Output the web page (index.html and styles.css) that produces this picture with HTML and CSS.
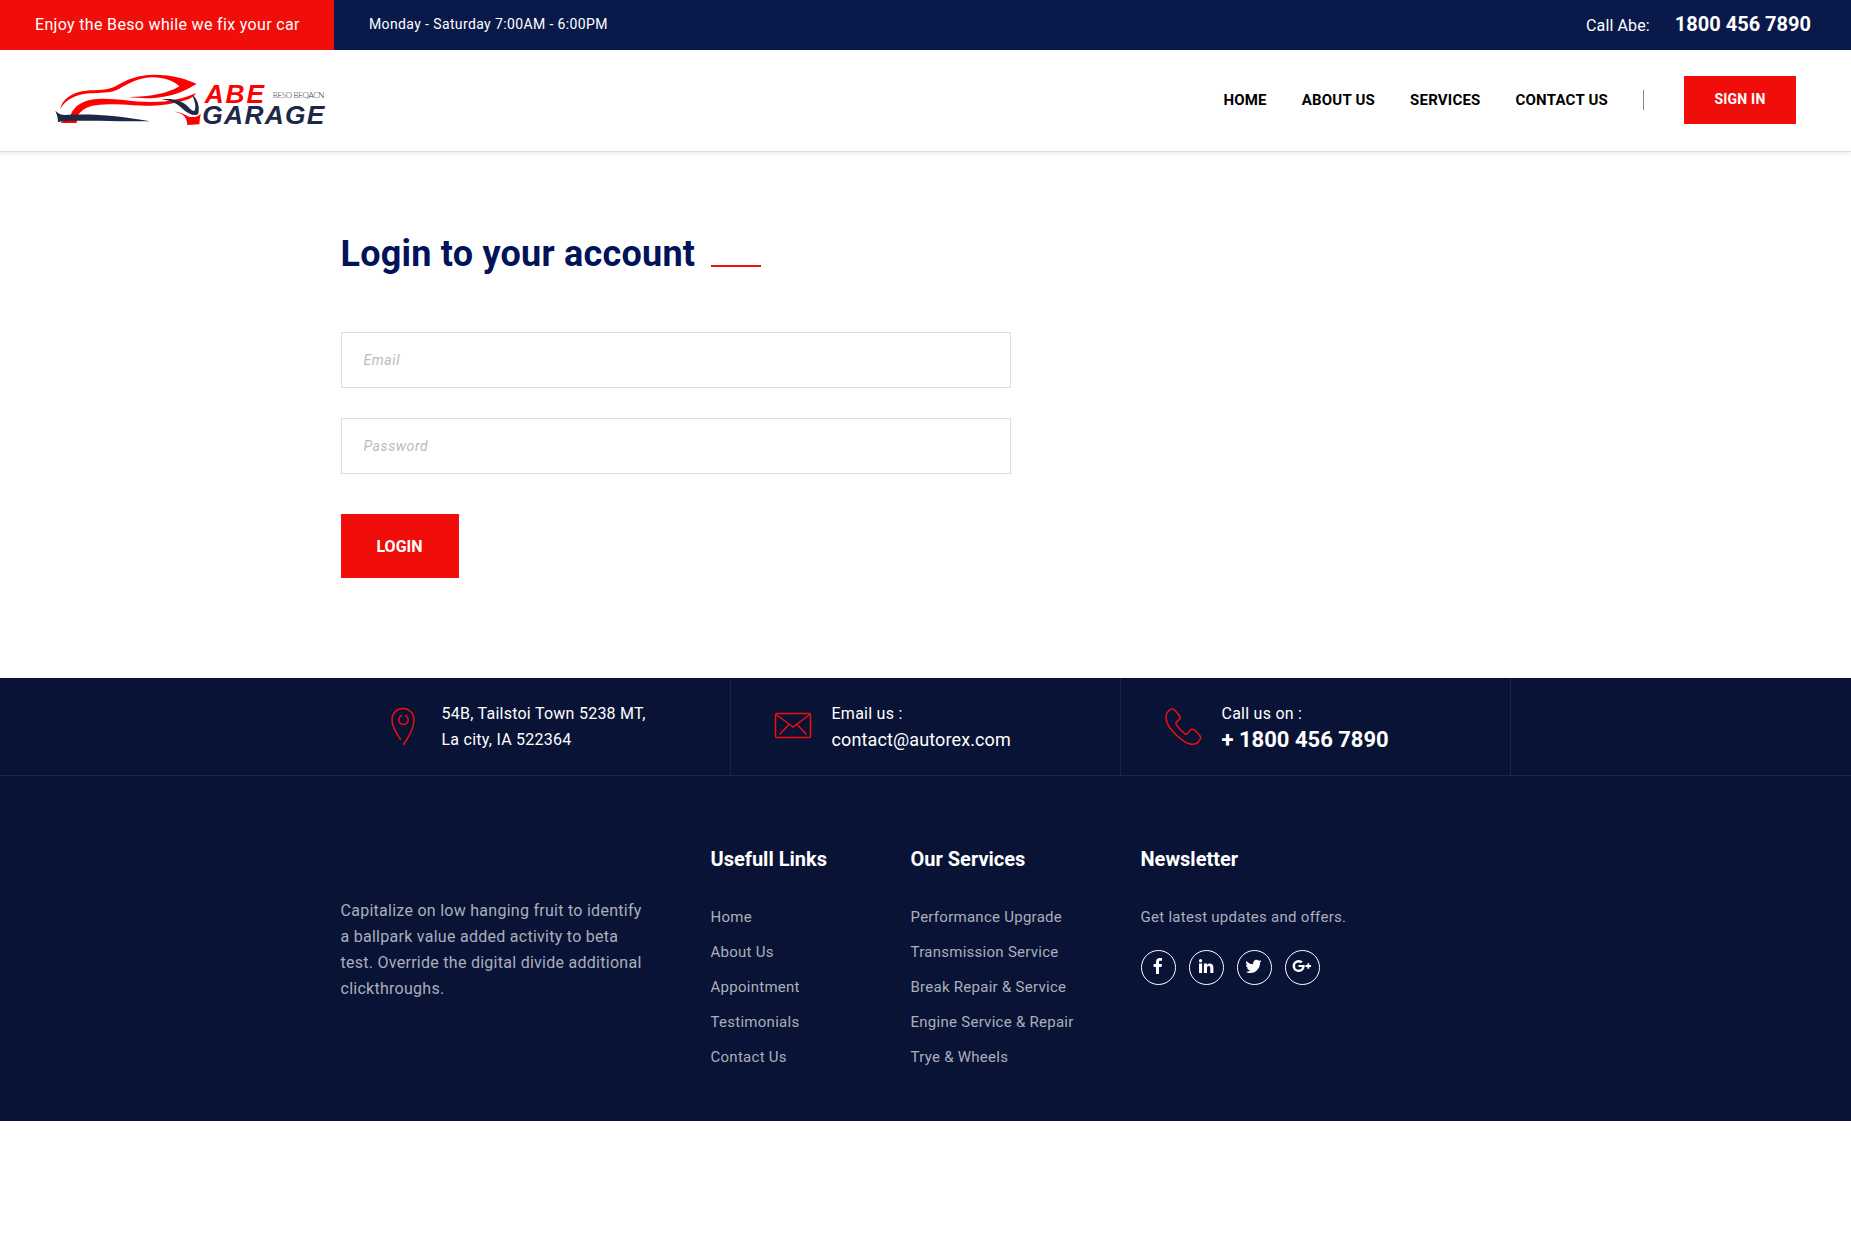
FILE: index.html
```html
<!DOCTYPE html>
<html lang="en">
<head>
<meta charset="utf-8">
<title>Abe Garage - Login</title>
<link rel="stylesheet" href="styles.css">
</head>
<body>
<header class="header">
  <div class="topbar">
    <div class="topbar-promo">Enjoy the Beso while we fix your car</div>
    <div class="topbar-hours">Monday - Saturday 7:00AM - 6:00PM</div>
    <div class="topbar-call"><span class="call-label">Call Abe:</span><strong class="call-number">1800 456 7890</strong></div>
  </div>
  <div class="navbar">
    <a class="logo" href="#" aria-label="Abe Garage">
      <svg width="300" height="80" viewBox="0 0 900 240">
        <g fill="#f00">
          <path d="M60 147C68 118 94 100 126 94C160 88 190 94 220 82C252 66 276 46 340 44C400 44 442 58 470 72C440 88 410 108 350 113C320 116 290 114 265 111C330 110 380 102 418 79C400 62 370 51 335 52C290 55 264 72 238 86C212 101 180 97 146 100C104 104 78 120 60 147Z"/>
          <path d="M62 189C66 182 86 180 92 164C104 136 130 120 172 117C230 114 270 126 330 126C390 126 430 116 468 99C462 110 452 116 440 119C390 136 340 139 280 136C230 132 200 132 168 136C138 140 124 152 112 168L110 189Z"/>
          <path d="M404 155C430 156 440 170 452 171C468 172 474 168 483 161C478 174 480 182 478 193L442 195C440 172 432 160 404 155Z"/>
        </g>
        <g fill="#1d2747">
          <path d="M46 152C54 160 62 165 76 165C160 160 240 168 330 184C250 184 160 182 100 182C80 182 66 184 54 186C54 172 50 162 46 152Z"/>
          <path d="M364 118C400 114 424 122 440 136C450 146 456 154 463 153C470 140 464 122 456 104C474 116 480 144 474 163C462 170 444 160 432 150C408 128 394 122 364 118Z"/>
        </g>
        <text class="logo-abe" x="494" y="129" textLength="178">ABE</text>
        <text class="logo-garage" x="487" y="193" textLength="366">GARAGE</text>
        <text class="logo-tag" x="698" y="114" textLength="155">BESO BEQACN</text>
      </svg>
    </a>
    <nav class="menu">
      <a href="#">HOME</a>
      <a href="#">ABOUT US</a>
      <a href="#">SERVICES</a>
      <a href="#">CONTACT US</a>
    </nav>
    <span class="menu-divider"></span>
    <a class="signin" href="#">SIGN IN</a>
  </div>
</header>

<main class="login container">
  <h1 class="login-title">Login to your account</h1>
  <form class="login-form">
    <input class="field" type="email" placeholder="Email">
    <input class="field" type="password" placeholder="Password">
    <button class="login-btn" type="button">LOGIN</button>
  </form>
</main>

<footer class="footer">
  <div class="contact-bar">
    <div class="contact-row container">
      <div class="contact">
        <svg class="contact-icon" width="40" height="40" viewBox="0 0 40 40"><path d="M17.500 33.500C12 25.500 9 20 9 13.500A11 11 0 0 1 31 13.500C31 21 27 29.500 20.500 38.500M18.600 9.500A4.700 4.700 0 1 0 22.400 9.500"/></svg>
        <div>54B, Tailstoi Town 5238 MT,<br>La city, IA 522364</div>
      </div>
      <div class="contact">
        <svg class="contact-icon" width="40" height="40" viewBox="0 0 40 40"><rect x="2.500" y="7.500" width="35" height="24" rx="1.500"/><path d="M3 8.500L16 18L20 21L24 18L37 8.500M16 18.500L7 28M24 18.500L33 28"/></svg>
        <div>Email us :<br><span class="contact-mail">contact@autorex.com</span></div>
      </div>
      <div class="contact">
        <svg class="contact-icon" width="40" height="40" viewBox="0 0 40 40"><path transform="translate(.5 .8)" d="M7.300 2.500C9 1.700 10.500 2.300 11.500 3.500L16 9C17 10.500 16.500 12 15.500 13C13 15 11.500 15.500 13 18C15.500 22 18.500 25 21.500 27C24 28.500 24 26 26.500 23.500C28 22.200 30 22.300 31.500 23.500L36.500 29C38 31 37 32.500 35.500 34.500C32 38.500 26 38.500 18.500 33C9 26 2 17 2.500 10C2.700 6 4.500 4 7.300 2.500Z"/></svg>
        <div>Call us on :<br><strong class="contact-phone">+ 1800 456 7890</strong></div>
      </div>
    </div>
  </div>
  <div class="widgets container">
    <p class="about">Capitalize on low hanging fruit to identify<br>a ballpark value added activity to beta<br>test. Override the digital divide additional<br>clickthroughs.</p>
    <section class="widget">
      <h2 class="widget-title">Usefull Links</h2>
      <ul class="links">
        <li>Home</li>
        <li>About Us</li>
        <li>Appointment</li>
        <li>Testimonials</li>
        <li>Contact Us</li>
      </ul>
    </section>
    <section class="widget">
      <h2 class="widget-title">Our Services</h2>
      <ul class="links">
        <li>Performance Upgrade</li>
        <li>Transmission Service</li>
        <li>Break Repair &amp; Service</li>
        <li>Engine Service &amp; Repair</li>
        <li>Trye &amp; Wheels</li>
      </ul>
    </section>
    <section class="widget">
      <h2 class="widget-title">Newsletter</h2>
      <p class="news">Get latest updates and offers.</p>
      <div class="social">
        <a href="#" aria-label="Facebook"><svg width="20" height="20" viewBox="0 0 20 20"><path d="M14 2.100V4.800H12.400C11.200 4.800 11 5.300 11 6.200V8.100H13.900L13.500 10.900H11V18H8V10.900H5.600V8.100H8V5.900C8 3.400 9.500 2 11.800 2C12.800 2 13.700 2 14 2.100Z"/></svg></a>
        <a href="#" aria-label="LinkedIn"><svg width="20" height="20" viewBox="0 0 20 20"><path d="M3 7.600H6.100V17H3ZM4.600 3.100A1.650 1.650 0 1 1 4.500 6.400A1.650 1.650 0 0 1 4.600 3.100ZM7.900 7.600H11V9C11.500 8.200 12.300 7.400 13.900 7.400C15.900 7.400 17.400 8.700 17.400 11.600V17H14.300V12C14.300 10.700 13.800 9.900 12.700 9.900C11.500 9.900 11 10.800 11 12V17H7.900Z"/></svg></a>
        <a href="#" aria-label="Twitter"><svg width="20" height="20" viewBox="0 0 20 20"><path d="M17.700 4.700C17.300 5.400 16.700 6 16 6.500C16.300 12 12 17 6.300 17C4.600 17 3 16.500 1.700 15.700C3.300 15.900 4.900 15.400 6.200 14.400C4.800 14.400 3.600 13.500 3.100 12.200C3.600 12.300 4.200 12.300 4.600 12.100C3 11.800 2 10.400 2 8.900C2.500 9.200 3 9.300 3.500 9.300C2.100 8.300 1.700 6.400 2.500 4.900C4.100 6.900 6.500 8.200 9.300 8.300C8.600 5.600 10.700 3.700 12.500 3.700C13.500 3.700 14.300 4.100 14.900 4.700C15.700 4.500 16.400 4.300 17 3.900C16.800 4.700 16.200 5.300 15.600 5.700C16.400 5.500 17.100 5 17.700 4.700Z"/></svg></a>
        <a href="#" aria-label="Google Plus"><svg width="20" height="20" viewBox="0 0 20 20"><path d="M6.500 8.900H12.600C13.200 12.800 10.700 16 6.700 16A6 6 0 1 1 10.700 5.600L9 7.300C8.500 6.800 7.700 6.400 6.700 6.400A3.650 3.650 0 1 0 6.700 13.700C9.200 13.700 10 12 10.100 11.100H6.500ZM15.400 7.200H17.200V9.100H19.100V10.900H17.200V12.800H15.400V10.900H13.500V9.100H15.400Z"/></svg></a>
      </div>
    </section>
  </div>
</footer>
</body>
</html>
```
FILE: styles.css
```css
* { box-sizing: border-box; }
body { margin: 0; background: #fff; font-family: Roboto, "Liberation Sans", sans-serif; color: #fff; }
a { color: inherit; text-decoration: none; }
h1, h2, p, ul { margin: 0; padding: 0; }
ul { list-style: none; }
.container { width: 1170px; margin: 0 auto; }

/* Header */
.header { height: 152px; border-bottom: 1px solid #dcdee2; box-shadow: 0 2px 5px rgba(0, 0, 0, .08); }
.topbar { display: flex; height: 50px; background: #08194a; line-height: 48px; font-size: 16px; }
.topbar-promo { width: 334px; padding-left: 35px; background: #f10e0a; line-height: 50px; letter-spacing: .33px; }
.topbar-hours { padding-left: 35px; font-size: 14px; letter-spacing: .38px; }
.topbar-call { display: flex; margin-left: auto; padding-right: 40px; gap: 25px; }
.call-label { line-height: 51px; letter-spacing: .13px; }
.call-number { font-size: 20px; font-weight: 700; }

.navbar { display: flex; align-items: center; height: 101px; padding: 0 55px 1px 40px; }
.logo { display: block; height: 80px; }
.logo svg { display: block; }
.logo-abe, .logo-garage { font: italic bold 79px "Liberation Sans", Arial, sans-serif; }
.logo-abe { fill: #f00; }
.logo-garage { fill: #1d2747; }
.logo-tag { font: 300 24px Lato, sans-serif; fill: #1d2747; }
.menu { display: flex; gap: 35px; margin-left: auto; color: #000; font-size: 15px; font-weight: 700; line-height: 20px; letter-spacing: .21px; }
.menu-divider { width: 1px; height: 20px; margin: 0 40px 0 35px; background: #888; }
.signin { width: 112px; height: 48px; background: #f10e0a; font-size: 14px; font-weight: 700; line-height: 46px; text-align: center; letter-spacing: .2px; }

/* Login form */
.login { height: 526px; padding-top: 80px; }
.login-title { display: flex; align-items: flex-start; gap: 16px; color: #03135a; font-size: 36px; font-weight: 700; line-height: 44px; letter-spacing: .22px; }
.login-title::after { content: ""; width: 50px; height: 2px; margin-top: 33px; background: #f10e0a; }
.login-form { display: flex; flex-direction: column; align-items: flex-start; gap: 30px; margin-top: 56px; }
.field { width: 670px; height: 56px; padding: 0 22px; border: 1px solid #ddd; background: #fff; font: 14px Roboto, sans-serif; letter-spacing: .6px; }
.field::placeholder { color: #bbb; font-style: italic; }
.login-btn { width: 118px; height: 64px; margin-top: 10px; border: 0; background: #f10e0a; color: #fff; font: 700 16px Roboto, sans-serif; }

/* Footer */
.footer { height: 443px; background: #091336; }
.contact-bar { height: 98px; border-bottom: 1px solid #1c2748; }
.contact-row { display: flex; height: 97px; }
.contact { display: flex; width: 390px; padding: 23px 0 0 42px; gap: 19px; border-right: 1px solid #1c2748; font-size: 16px; line-height: 26px; letter-spacing: .25px; }
.contact-icon { margin-top: 5px; fill: none; stroke: #f10e0a; stroke-width: 1.5; stroke-linecap: round; overflow: visible; }
.contact-mail { font-size: 18px; letter-spacing: .12px; }
.contact-phone { font-size: 22px; font-weight: 700; letter-spacing: 0; }

.widgets { display: flex; padding-top: 67px; color: #aaafbb; letter-spacing: .27px; }
.about { width: 370px; padding-top: 55px; font-size: 16px; line-height: 26px; }
.widget { width: 200px; }
.widget + .widget { width: 230px; }
.widget-title { color: #fff; font-size: 20px; font-weight: 700; line-height: 32px; letter-spacing: 0; }
.links, .news { margin-top: 25px; font-size: 15px; line-height: 35px; }
.social { display: flex; gap: 13px; margin-top: 15px; }
.social a { display: flex; justify-content: center; width: 35px; height: 35px; padding-top: 5px; border: 1px solid #fff; border-radius: 50%; }
.social svg { fill: #fff; }
```
